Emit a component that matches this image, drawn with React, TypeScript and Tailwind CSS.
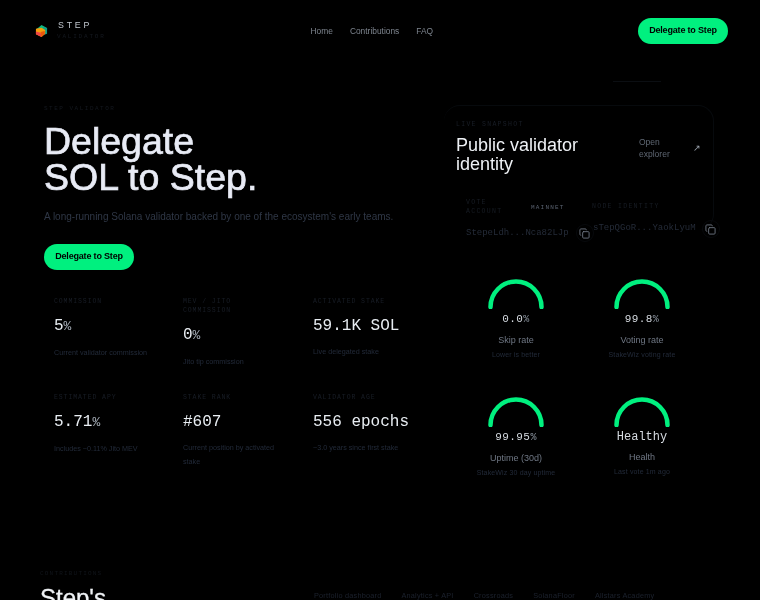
const sans = "font-['Liberation_Sans',sans-serif]";
const mono = "font-['Liberation_Mono',monospace]";

function Logo() {
  return (
    <svg width="13" height="14" viewBox="0 0 14 14">
      <path d="M7 0.5 L13 3.8 V6 L7 7 L1.5 5 Z" fill="#10b981" />
      <path d="M9 2.5 L13 4 V10 L10 11 Z" fill="#0f9f8a" />
      <path d="M1 4.5 L7 3.5 L11 6 V10 L7 13.5 L1 10.5 Z" fill="#f59e0b" />
      <path d="M1 7.5 L6 9 L7 13.5 L1 10.5 Z" fill="#ef4444" />
      <path d="M6 8 L10.5 7 V10.2 L7 13.5 Z" fill="#ea580c" />
    </svg>
  );
}

function Stat({ label, value, unit, note }: { label: string; value: string; unit?: string; note: string }) {
  return (
    <div className="max-w-[100px]">
      <div className={`${mono} text-[6.5px] leading-[9px] tracking-[0.14em] text-[#181d26] uppercase`}>{label}</div>
      <div className={`${mono} mt-[8px] text-[16px] leading-[24px] text-[#e8edf2] whitespace-nowrap`}>
        {value}
        {unit && <span className="text-[13px] text-[#a8b0ba]">{unit}</span>}
      </div>
      <div className="mt-[6.5px] text-[7.2px] leading-[14.5px] text-[#222a39]">{note}</div>
    </div>
  );
}

function Gauge({ value, unit, label, note, big }: { value: string; unit?: string; label: string; note: string; big?: boolean }) {
  return (
    <div className="flex flex-col items-center w-[126px]">
      <svg width="60" height="31" viewBox="0 0 60 31" className="block">
        <path d="M4.5 29 A25.5 25.5 0 0 1 55.5 29" fill="none" stroke="#00f07f" strokeWidth="4.5" strokeLinecap="round" />
      </svg>
      <div className={`${mono} mt-[1px] leading-[18px] text-[#d5dae0] ${big ? "text-[12px]" : "text-[11px] tracking-[0.04em]"}`}>
        {value}
        {unit && <span className="text-[10px] text-[#8f98a3]">{unit}</span>}
      </div>
      <div className="mt-[4px] text-[9px] leading-[14px] text-[#6f7784]">{label}</div>
      <div className="mt-[2px] text-[7px] leading-[12px] tracking-[0.02em] text-[#222a39]">{note}</div>
    </div>
  );
}

function CopyBtn() {
  return (
    <div className="w-[18px] h-[18px] rounded-full border border-[#07090c] flex items-center justify-center shrink-0">
      <svg width="11" height="11" viewBox="0 0 24 24" fill="none" stroke="#6c7480" strokeWidth="2" strokeLinecap="round" strokeLinejoin="round">
        <rect x="8" y="8" width="14" height="14" rx="2" />
        <path d="M4 16c-1.1 0-2-.9-2-2V4c0-1.1.9-2 2-2h10c1.1 0 2 .9 2 2" />
      </svg>
    </div>
  );
}

function Cta() {
  return (
    <div className={`${sans} h-[26px] w-[90px] rounded-full bg-[#00f07f] flex items-center justify-center font-bold text-[9px] tracking-[-0.02em] text-black`}>
      Delegate to Step
    </div>
  );
}

export default function App() {
  return (
    <div className={`${sans} bg-black w-[760px] h-[600px] overflow-hidden blur-[0.4px]`}>
      <header className="flex items-center justify-between pl-[35px] pr-[32px] h-[62px]">
        <div className="flex items-center gap-[9px]">
          <Logo />
          <div className="-mt-[1px]">
            <div className="text-[8.8px] leading-[11px] tracking-[0.32em] ml-[1px] text-[#c2c8cf]">STEP</div>
            <div className={`${mono} mt-[2px] text-[6px] leading-[8px] tracking-[0.3em] text-[#14181f]`}>VALIDATOR</div>
          </div>
        </div>
        <nav className="flex items-center gap-[17px] text-[8.4px] text-[#7d848e]">
          <span>Home</span>
          <span>Contributions</span>
          <span>FAQ</span>
        </nav>
        <Cta />
      </header>

      <main className="flex pl-[44px] pr-[44px] relative h-[508px]">
        <section className="w-[400px] shrink-0 pt-[43px]">
          <div className={`${mono} text-[6px] leading-[8px] tracking-[0.25em] text-[#14181f]`}>STEP VALIDATOR</div>
          <h1 className="mt-[10px] text-[37.5px] leading-[36px] font-normal text-[#e8ebf5] [-webkit-text-stroke:0.7px_#e8ebf5]">
            Delegate<br />SOL to Step.
          </h1>
          <p className="mt-[14px] text-[10px] leading-[16px] text-[#2f3746] whitespace-nowrap">
            A long-running Solana validator backed by one of the ecosystem's early teams.
          </p>
          <div className="mt-[19px]">
            <Cta />
          </div>
          <div className="mt-[27px] ml-[10px] grid grid-cols-[129px_130px_100px] gap-y-[24px] items-start">
            <Stat label="Commission" value="5" unit="%" note="Current validator commission" />
            <Stat label="MEV / Jito Commission" value="0" unit="%" note="Jito tip commission" />
            <Stat label="Activated stake" value="59.1K SOL" note="Live delegated stake" />
            <Stat label="Estimated APY" value="5.71" unit="%" note="Includes ~0.11% Jito MEV" />
            <Stat label="Stake rank" value="#607" note="Current position by activated stake" />
            <Stat label="Validator age" value="556 epochs" note="~3.0 years since first stake" />
          </div>
        </section>

        <section className="relative w-[270px] mt-[43px] h-[420px]">
          <div className="absolute -top-[24px] left-[169px] w-[48px] h-px bg-[#0b0e12]" />
          <div className="rounded-[16px] border-t border-r border-[#070a0d] pt-[14px] pl-[12px] pr-[12px] h-[125px]">
            <div className={`${mono} text-[6.5px] leading-[9px] tracking-[0.2em] text-[#181d26]`}>LIVE SNAPSHOT</div>
            <div className="flex justify-between items-start mt-[7px]">
              <h2 className="text-[18px] leading-[19px] font-normal text-[#eef1f5] w-[150px]">Public validator identity</h2>
              <div className="flex items-center w-[62px] mt-0 justify-between text-[8.5px] leading-[12px] text-[#5f6773]">
                <span>Open<br />explorer</span>
                <span className="text-[9px] text-[#9aa2ac]">↗</span>
              </div>
            </div>
            <div className="flex mt-[24px] items-center">
              <div className={`${mono} ml-[10px] text-[6.5px] leading-[9px] tracking-[0.2em] text-[#171c24] w-[65px]`}>VOTE<br />ACCOUNT</div>
              <div className={`${mono} text-[6px] tracking-[0.2em] text-[#5a6270] w-[61px]`}>MAINNET</div>
              <div className={`${mono} text-[6.5px] tracking-[0.2em] text-[#171c24]`}>NODE IDENTITY</div>
            </div>
            <div className="flex mt-[8px]">
              <div className="flex items-center ml-[10px] w-[127px]">
                <span className={`${mono} text-[9px] text-[#242b38] whitespace-nowrap mt-[2px]`}>StepeLdh...Nca82LJp</span>
                <span className="ml-[7px]"><CopyBtn /></span>
              </div>
              <div className="flex items-center -mt-[8px]">
                <span className={`${mono} text-[9px] text-[#242b38] whitespace-nowrap`}>sTepQGoR...YaokLyuM</span>
                <span className="ml-[6px]"><CopyBtn /></span>
              </div>
            </div>
          </div>
          <div className="grid grid-cols-[126px_126px] gap-y-[35px] mt-[48px] ml-[9px]">
            <Gauge value="0.0" unit="%" label="Skip rate" note="Lower is better" />
            <Gauge value="99.8" unit="%" label="Voting rate" note="StakeWiz voting rate" />
            <Gauge value="99.95" unit="%" label="Uptime (30d)" note="StakeWiz 30 day uptime" />
            <Gauge value="Healthy" label="Health" note="Last vote 1m ago" big />
          </div>
        </section>
      </main>

      <footer className="flex h-[30px] overflow-hidden pl-[40px]">
        <div className="w-[274px]">
          <div className={`${mono} text-[6px] leading-[8px] tracking-[0.2em] text-[#10141a]`}>CONTRIBUTIONS</div>
          <div className="mt-[7px] text-[24px] leading-[26px] text-[#f0f3f6] [-webkit-text-stroke:0.3px_#f0f3f6]">Step's</div>
        </div>
        <div className="flex gap-[20px] text-[7.3px] tracking-[0.03em] text-[#1c222e] pt-[22px] leading-[8px] whitespace-nowrap">
          <span>Portfolio dashboard</span>
          <span>Analytics + API</span>
          <span>Crossroads</span>
          <span>SolanaFloor</span>
          <span>Allstars Academy</span>
        </div>
      </footer>
    </div>
  );
}
